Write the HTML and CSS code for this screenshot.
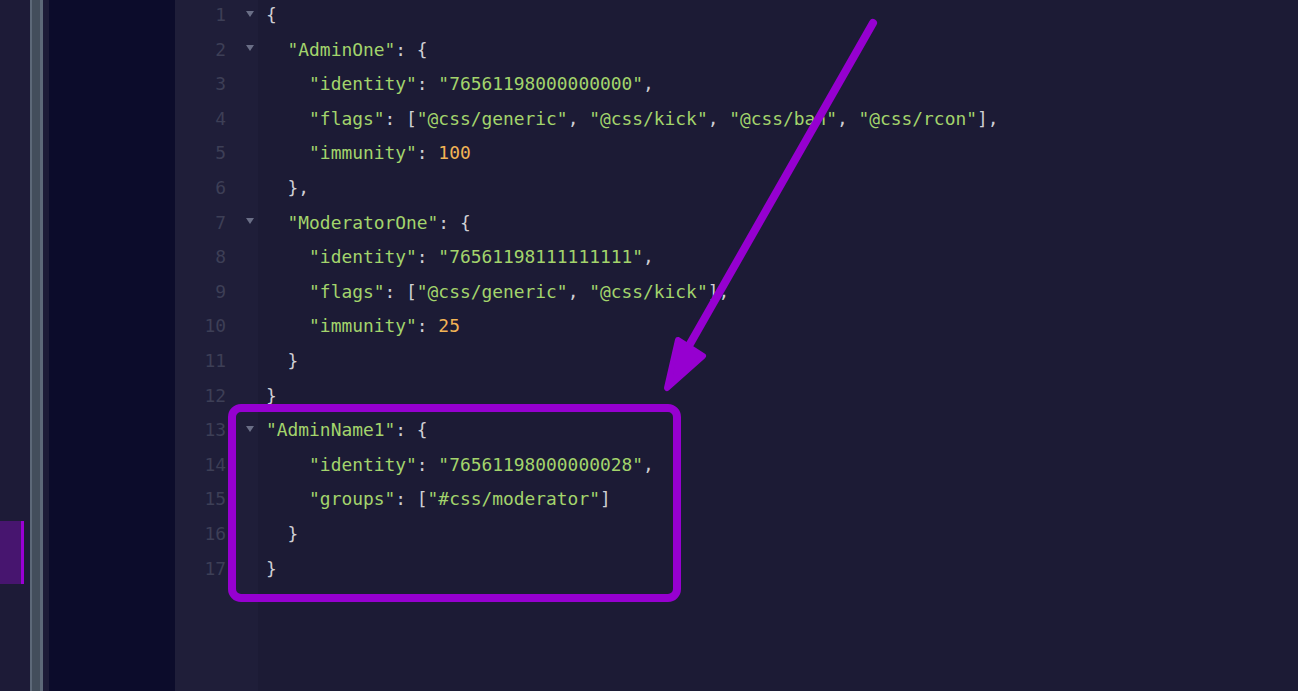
FILE: index.html
```html
<!DOCTYPE html>
<html>
<head>
<meta charset="utf-8">
<link rel="stylesheet" href="styles.css">
</head>
<body>
<div class="app">
  <div class="sidebar"><div class="sel"></div></div>
  <div class="scrollbar"><div class="sb-edge"></div><div class="sb-mid"></div><div class="sb-edge2"></div></div>
  <div class="spacer"></div>
  <div class="panel"></div>
  <div class="editor">
    <div class="gutter">
      <div class="gl"><span class="num">1</span><span class="fold"><i class="tri"></i></span></div>
      <div class="gl"><span class="num">2</span><span class="fold"><i class="tri"></i></span></div>
      <div class="gl"><span class="num">3</span><span class="fold"></span></div>
      <div class="gl"><span class="num">4</span><span class="fold"></span></div>
      <div class="gl"><span class="num">5</span><span class="fold"></span></div>
      <div class="gl"><span class="num">6</span><span class="fold"></span></div>
      <div class="gl"><span class="num">7</span><span class="fold"><i class="tri"></i></span></div>
      <div class="gl"><span class="num">8</span><span class="fold"></span></div>
      <div class="gl"><span class="num">9</span><span class="fold"></span></div>
      <div class="gl"><span class="num">10</span><span class="fold"></span></div>
      <div class="gl"><span class="num">11</span><span class="fold"></span></div>
      <div class="gl"><span class="num">12</span><span class="fold"></span></div>
      <div class="gl"><span class="num">13</span><span class="fold"><i class="tri"></i></span></div>
      <div class="gl"><span class="num">14</span><span class="fold"></span></div>
      <div class="gl"><span class="num">15</span><span class="fold"></span></div>
      <div class="gl"><span class="num">16</span><span class="fold"></span></div>
      <div class="gl"><span class="num">17</span><span class="fold"></span></div>
    </div>
    <div class="code">
      <div class="ln"><span class="p">{</span></div>
      <div class="ln">  <span class="s">"AdminOne"</span><span class="p">: {</span></div>
      <div class="ln">    <span class="s">"identity"</span><span class="p">: </span><span class="s">"76561198000000000"</span><span class="p">,</span></div>
      <div class="ln">    <span class="s">"flags"</span><span class="p">: [</span><span class="s">"@css/generic"</span><span class="p">, </span><span class="s">"@css/kick"</span><span class="p">, </span><span class="s">"@css/ban"</span><span class="p">, </span><span class="s">"@css/rcon"</span><span class="p">],</span></div>
      <div class="ln">    <span class="s">"immunity"</span><span class="p">: </span><span class="n">100</span></div>
      <div class="ln">  <span class="p">},</span></div>
      <div class="ln">  <span class="s">"ModeratorOne"</span><span class="p">: {</span></div>
      <div class="ln">    <span class="s">"identity"</span><span class="p">: </span><span class="s">"76561198111111111"</span><span class="p">,</span></div>
      <div class="ln">    <span class="s">"flags"</span><span class="p">: [</span><span class="s">"@css/generic"</span><span class="p">, </span><span class="s">"@css/kick"</span><span class="p">],</span></div>
      <div class="ln">    <span class="s">"immunity"</span><span class="p">: </span><span class="n">25</span></div>
      <div class="ln">  <span class="p">}</span></div>
      <div class="ln"><span class="p">}</span></div>
      <div class="ln"><span class="s">"AdminName1"</span><span class="p">: {</span></div>
      <div class="ln">    <span class="s">"identity"</span><span class="p">: </span><span class="s">"76561198000000028"</span><span class="p">,</span></div>
      <div class="ln">    <span class="s">"groups"</span><span class="p">: [</span><span class="s">"#css/moderator"</span><span class="p">]</span></div>
      <div class="ln">  <span class="p">}</span></div>
      <div class="ln"><span class="p">}</span></div>
    </div>
  </div>
  <svg class="overlay" width="1298" height="691" viewBox="0 0 1298 691">
    <rect x="232" y="408" width="445" height="190" rx="9" ry="9" fill="none" stroke="#9600d0" stroke-width="8"/>
    <line x1="873" y1="23" x2="674" y2="372" stroke="#9600d0" stroke-width="8" stroke-linecap="round"/>
    <polygon points="667,388 678,340 703,356" fill="#9600d0" stroke="#9600d0" stroke-width="6" stroke-linejoin="round"/>
  </svg>
</div>
</body>
</html>
```

FILE: styles.css
```css
html, body {
  margin: 0;
  padding: 0;
  width: 1298px;
  height: 691px;
  overflow: hidden;
  background: #1c1b35;
}

.app {
  position: relative;
  display: flex;
  width: 1298px;
  height: 691px;
  overflow: hidden;
}

.sidebar {
  width: 30px;
  flex: none;
  background: #1d1b37;
  padding-top: 521px;
  box-sizing: border-box;
}

.sel {
  width: 21px;
  height: 63px;
  background: #47156f;
  border-right: 3px solid #9a00d4;
}

.scrollbar {
  width: 13px;
  flex: none;
  display: flex;
}

.sb-edge {
  width: 2px;
  background: #5d6878;
}

.sb-mid {
  width: 8px;
  background: #434d5b;
}

.sb-edge2 {
  width: 3px;
  background: #5d6878;
}

.spacer {
  width: 6px;
  flex: none;
  background: #1d1b37;
}

.panel {
  width: 126px;
  flex: none;
  background: #0c0c2b;
}

.editor {
  flex: 1;
  display: flex;
  font-family: "DejaVu Sans Mono", "Liberation Mono", monospace;
  font-size: 17.9px;
  line-height: 34.6px;
}

.gutter {
  width: 83px;
  flex: none;
  background: #1f1e39;
  margin-top: -2px;
}

.gl {
  display: flex;
  height: 34.6px;
}

.num {
  width: 51px;
  text-align: right;
  color: #3d3f56;
}

.fold {
  width: 32px;
  display: flex;
  align-items: center;
  justify-content: flex-end;
  padding-right: 4px;
  box-sizing: border-box;
}

.tri {
  display: block;
  width: 0;
  height: 0;
  border-left: 4px solid transparent;
  border-right: 4px solid transparent;
  border-top: 6px solid #6a6e86;
  margin-top: -3px;
}

.code {
  flex: 1;
  padding-left: 8px;
  margin-top: -2px;
  color: #cfcfd4;
}

.ln {
  height: 34.6px;
  white-space: pre;
}

.s {
  color: #a3d46c;
}

.p {
  color: #cfcfd4;
}

.n {
  color: #f2b455;
}

.overlay {
  position: absolute;
  left: 0;
  top: 0;
  pointer-events: none;
}
```
